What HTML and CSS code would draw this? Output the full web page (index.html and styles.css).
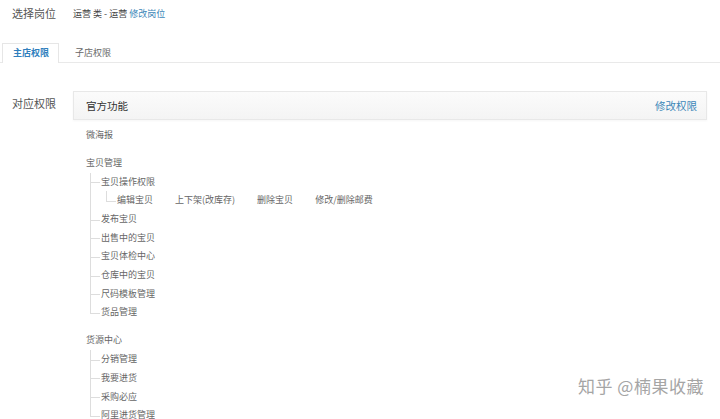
FILE: index.html
```
<!DOCTYPE html>
<html lang="zh-CN">
<head>
  <meta charset="UTF-8">
  <title>岗位权限</title>
  <link rel="stylesheet" href="styles.css">
</head>
<body>

  <div class="row-post">
    <span class="label">选择岗位</span>
    <span class="post">运营 类 - 运营 <a href="#">修改岗位</a></span>
  </div>

  <div class="tabs">
    <span class="tab active">主店权限</span>
    <span class="tab">子店权限</span>
  </div>

  <div class="row-perm">
    <span class="label">对应权限</span>
    <div class="perm-box">
      <div class="perm-head">
        <span>官方功能</span>
        <a href="#">修改权限</a>
      </div>

      <ul class="tree">
        <li class="group"><div class="node">微海报</div></li>
        <li class="group">
          <div class="node">宝贝管理</div>
          <ul class="children">
            <li>
              <div class="node">宝贝操作权限</div>
              <ul class="children sub">
                <li class="inline">
                  <span>编辑宝贝</span>
                  <span>上下架(改库存)</span>
                  <span>删除宝贝</span>
                  <span>修改/删除邮费</span>
                </li>
              </ul>
            </li>
            <li><div class="node">发布宝贝</div></li>
            <li><div class="node">出售中的宝贝</div></li>
            <li><div class="node">宝贝体检中心</div></li>
            <li><div class="node">仓库中的宝贝</div></li>
            <li><div class="node">尺码模板管理</div></li>
            <li><div class="node">货品管理</div></li>
          </ul>
        </li>
        <li class="group">
          <div class="node">货源中心</div>
          <ul class="children">
            <li><div class="node">分销管理</div></li>
            <li><div class="node">我要进货</div></li>
            <li><div class="node">采购必应</div></li>
            <li><div class="node">阿里进货管理</div></li>
          </ul>
        </li>
      </ul>
    </div>
  </div>

  <!-- 水印 -->
  <div class="watermark">知乎 @楠果收藏</div>

</body>
</html>
```

FILE: styles.css
```
body {
  margin: 0;
  font-family: "Noto Sans CJK SC", "Noto Sans", sans-serif;
  background: #fff;
  color: #555;
  overflow: hidden;
}
a {
  color: #3c87b8;
  text-decoration: none;
}
ul {
  list-style: none;
  margin: 0;
  padding: 0;
}

.label {
  width: 61px;
  flex: none;
  font-size: 11px;
  color: #555;
}

.row-post {
  display: flex;
  align-items: center;
  height: 26px;
  padding-left: 12px;
}
.post {
  font-size: 9px;
  color: #444;
}

.tabs {
  display: flex;
  margin-top: 17px;
  padding-left: 2px;
  border-bottom: 1px solid #e9e9e9;
  height: 19px;
}
.tab {
  font-size: 9px;
  color: #666;
  padding: 0 9px 0 10px;
  line-height: 19px;
  margin-right: 6px;
}
.tab.active {
  color: #2f7fbd;
  font-weight: bold;
  border: 1px solid #e6e6e6;
  border-bottom: none;
  background: #fff;
  height: 19px;
  line-height: 18px;
  margin-bottom: -1px;
}

.row-perm {
  display: flex;
  padding: 28px 13px 0 12px;
}
.row-perm .label {
  margin-top: 4px;
}
.perm-box {
  flex: 1;
}
.perm-head {
  display: flex;
  justify-content: space-between;
  align-items: center;
  height: 27px;
  padding: 0 9px 0 12px;
  border: 1px solid #e8e8e8;
  background: linear-gradient(#fbfbfb, #f4f4f4);
  font-size: 10.5px;
  color: #333;
  box-shadow: 0 1px 2px rgba(0,0,0,0.04);
}

.tree {
  padding-left: 13px;
  padding-top: 6px;
  font-size: 9px;
  color: #666;
}
.node {
  height: 18.7px;
  line-height: 18.7px;
}
.group {
  margin-bottom: 9.3px;
}
.children {
  margin-left: 4px;
}
.children > li {
  position: relative;
  padding-left: 11px;
}
/* 连接线 */
.children > li::before {
  content: '';
  position: absolute;
  left: 0;
  top: 0;
  width: 9px;
  height: 9.5px;
  border-left: 1px solid #ddd;
  border-bottom: 1px solid #ddd;
}
.children > li::after {
  content: '';
  position: absolute;
  left: 0;
  top: 9.5px;
  bottom: 0;
  border-left: 1px solid #ddd;
}
.children > li:last-child::after {
  display: none;
}
.children.sub {
  margin-left: 5px;
}
.inline {
  display: flex;
  gap: 22px;
  height: 18.7px;
  line-height: 18.7px;
}

.watermark {
  position: absolute;
  left: 578px;
  top: 373px;
  font-size: 17px;
  color: #a5a5a5;
  letter-spacing: 0.5px;
  text-shadow: 0 0 2px #fff, 0 0 1px #fff;
}
```
